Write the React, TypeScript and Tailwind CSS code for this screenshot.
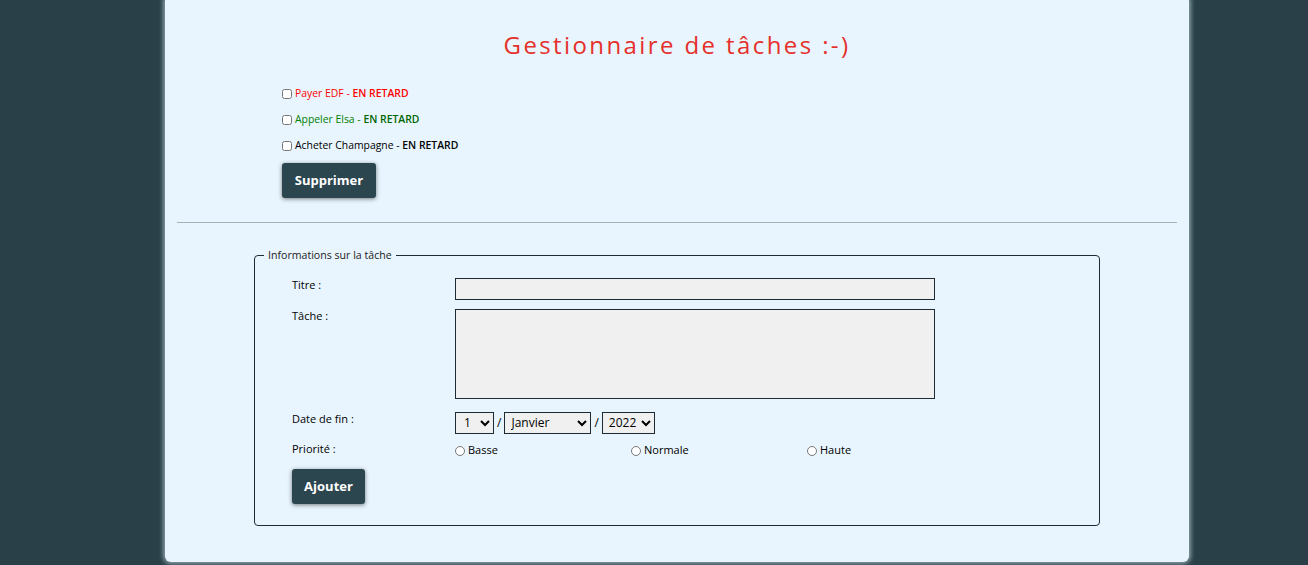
import React from "react";

const tasks = [
  { label: "Payer EDF", color: "text-[#ff0000]", late: "text-[#ff0000]" },
  { label: "Appeler Elsa", color: "text-[#008000]", late: "text-[#006400]" },
  { label: "Acheter Champagne", color: "text-black", late: "text-black" },
];

const months = ["Janvier", "Février", "Mars", "Avril", "Mai", "Juin", "Juillet", "Août", "Septembre", "Octobre", "Novembre", "Décembre"];

export default function App() {
  return (
    <div className="min-h-[565px] bg-[#2a4048] font-['Open_Sans',sans-serif] text-[11px] text-black">
      <div className="ml-[165px] w-[1024px] h-[562px] bg-[#e8f5fe] rounded-b-[6px] shadow-[0_0_4px_2px_rgba(180,200,210,0.7)] flex flex-col">
        {/* Header */}
        <h1 className="mt-[29px] text-center text-[24px] leading-[32px] tracking-[0.1em] text-[#e5302b]">
          Gestionnaire de tâches :-)
        </h1>

        {/* Liste des tâches */}
        <div className="ml-[117px] mt-[25px] flex flex-col gap-[10px]">
          {tasks.map((t) => (
            <label key={t.label} className="flex items-center h-[16px] gap-[3px] text-[10.4px]">
              <input type="checkbox" className="w-[10px] h-[10px] m-0" />
              <span className={t.color}>
                {t.label} - <span className={`font-semibold ${t.late}`}>EN RETARD</span>
              </span>
            </label>
          ))}
          <button className="mt-[-1px] w-[94px] h-[35px] rounded-[3px] bg-[#2c4650] text-white font-bold text-[13px] shadow-[0_1px_4px_rgba(0,0,0,0.5)]">
            Supprimer
          </button>
        </div>

        <hr className="mx-[12px] mt-[24px] border-0 border-t border-[#a8b0b4]" />

        {/* Formulaire */}
        <fieldset className="ml-[89px] mt-[25px] w-[846px] h-[278px] border border-[#1c2a33] rounded-[4px] px-[37px] pt-[13px]">
          <legend className="px-[4px] ml-[-28px] text-[10.6px] text-[#222]">Informations sur la tâche</legend>
          <div className="flex mt-[1px]">
            <span className="w-[163px] leading-[14px]">Titre :</span>
            <input type="text" className="w-[480px] h-[22px] bg-[#f0f0f0] border border-[#1c2a33]" />
          </div>
          <div className="flex mt-[9px]">
            <span className="w-[163px] leading-[14px]">Tâche :</span>
            <textarea className="w-[480px] h-[90px] bg-[#f0f0f0] border border-[#1c2a33] resize-none" />
          </div>
          <div className="flex mt-[13px]">
            <span className="w-[163px] leading-[14px]">Date de fin :</span>
            <div className="flex items-center gap-[3px] text-[12px]">
              <select className="w-[39px] h-[22px] bg-[#f0f0f0] border border-[#1c2a33] pl-[4px]">
                {Array.from({ length: 31 }, (_, i) => (
                  <option key={i}>{i + 1}</option>
                ))}
              </select>
              <span>/</span>
              <select className="w-[87px] h-[22px] bg-[#f0f0f0] border border-[#1c2a33] pl-[2px]">
                {months.map((m) => (
                  <option key={m}>{m}</option>
                ))}
              </select>
              <span>/</span>
              <select className="w-[53px] h-[22px] bg-[#f0f0f0] border border-[#1c2a33] pl-[2px]">
                <option>2022</option>
                <option>2023</option>
              </select>
            </div>
          </div>
          <div className="flex items-center h-[16px] mt-[8px]">
            <span className="w-[163px] mt-[-2px]">Priorité :</span>
            <div className="flex">
              {["Basse", "Normale", "Haute"].map((p) => (
                <label key={p} className="w-[176px] flex items-center gap-[3px]">
                  <input type="radio" name="prio" className="w-[10px] h-[10px] m-0 mt-[2px]" />
                  {p}
                </label>
              ))}
            </div>
          </div>
          <button className="mt-[11px] w-[73px] h-[35px] rounded-[3px] bg-[#2c4650] text-white font-bold text-[13px] shadow-[0_1px_4px_rgba(0,0,0,0.5)]">
            Ajouter
          </button>
        </fieldset>
      </div>
    </div>
  );
}
